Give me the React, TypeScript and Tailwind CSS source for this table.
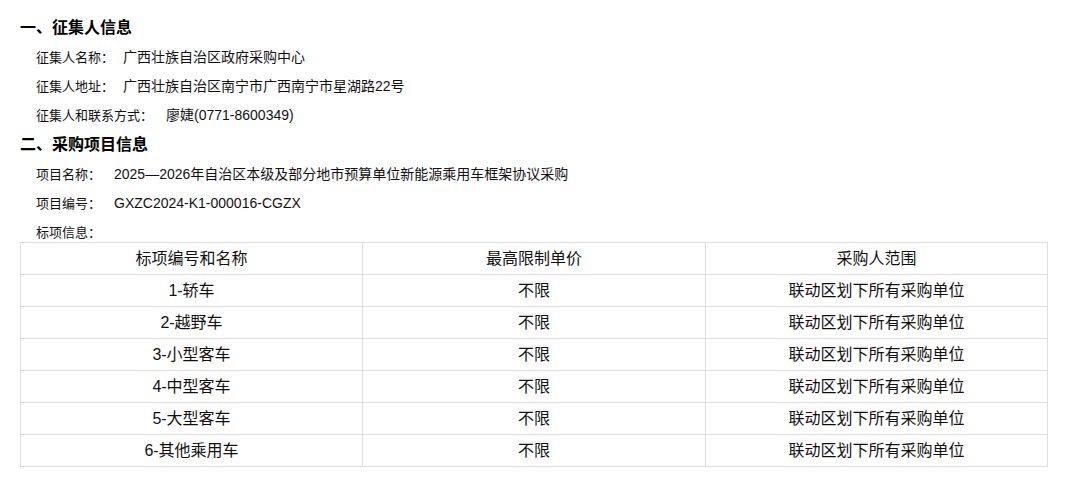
const font = "font-['Liberation_Sans','Noto_Sans_CJK_SC',sans-serif]";

type InfoLine = { label: string; value: string; gap: string };

const collector: InfoLine[] = [
  { label: "征集人名称：", value: "广西壮族自治区政府采购中心", gap: "ml-[9px]" },
  { label: "征集人地址：", value: "广西壮族自治区南宁市广西南宁市星湖路22号", gap: "ml-[9px]" },
  { label: "征集人和联系方式：", value: "廖婕(0771-8600349)", gap: "ml-[13px]" },
];

const project: InfoLine[] = [
  {
    label: "项目名称：",
    value: "2025—2026年自治区本级及部分地市预算单位新能源乘用车框架协议采购",
    gap: "ml-[13px]",
  },
  { label: "项目编号：", value: "GXZC2024-K1-000016-CGZX", gap: "ml-[13px]" },
];

const lots = [
  "1-轿车",
  "2-越野车",
  "3-小型客车",
  "4-中型客车",
  "5-大型客车",
  "6-其他乘用车",
];

function Line({ item }: { item: InfoLine }) {
  return (
    <div className="flex h-[29px] items-center pl-[36px]">
      <span className="text-[13px]">{item.label}</span>
      <span className={`${item.gap} text-[14px]`}>{item.value}</span>
    </div>
  );
}

function Heading({ children }: { children: React.ReactNode }) {
  return (
    <h2 className="flex h-[30px] items-center pl-[20px] text-[16px] font-bold text-black">
      {children}
    </h2>
  );
}

export default function App() {
  const cell =
    "flex h-[32px] items-center justify-center border-r border-b border-[#ddd] text-[16px]";

  return (
    <div className={`${font} min-h-[482px] bg-white pt-[13px] text-[#111]`}>
      <Heading>一、征集人信息</Heading>
      {collector.map((item) => (
        <Line key={item.label} item={item} />
      ))}

      <Heading>二、采购项目信息</Heading>
      {project.map((item) => (
        <Line key={item.label} item={item} />
      ))}

      <div className="flex h-[24px] items-end pl-[36px]">
        <span className="text-[13px] leading-[18px]">标项信息：</span>
      </div>

      {/* lot table */}
      <div className="ml-[20px] grid w-[1028px] grid-cols-[342px_343px_342px] border-t border-l border-[#ddd]">
        <div className={cell}>标项编号和名称</div>
        <div className={cell}>最高限制单价</div>
        <div className={cell}>采购人范围</div>
        {lots.map((lot) => (
          <div key={lot} className="contents">
            <div className={cell}>{lot}</div>
            <div className={cell}>不限</div>
            <div className={cell}>联动区划下所有采购单位</div>
          </div>
        ))}
      </div>
    </div>
  );
}
